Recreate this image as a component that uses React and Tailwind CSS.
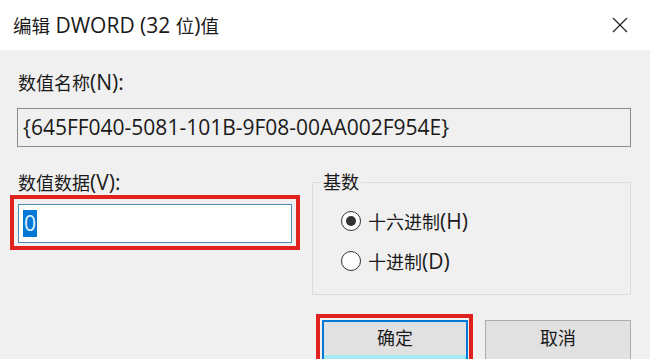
import React from 'react';

const font = { fontFamily: '"Open Sans", "Noto Sans CJK SC", sans-serif' };

// Latin runs sit a bit larger than the CJK glyphs, like YaHei UI does
const L = ({ children }) => <span className="text-[21px]">{children}</span>;

const Radio = ({ checked, children }) => (
  <label className="flex items-center gap-[7px] h-[24px]">
    <span className="w-[20px] h-[20px] rounded-full border border-[#333] bg-white flex items-center justify-center">
      {checked && <span className="w-[10px] h-[10px] rounded-full bg-[#333]" />}
    </span>
    <span className="text-[18px] leading-[24px] text-[#1a1a1a]">{children}</span>
  </label>
);

const App = () => {
  return (
    <div className="w-[650px] h-[359px] overflow-hidden bg-[#f0f0f0] text-[#1a1a1a]" style={font}>
      {/* title bar */}
      <div className="h-[50px] bg-white flex items-center justify-between pl-[13px] pr-[22px]">
        <span className="text-[18.5px] leading-[26px] text-[#1a1a1a]">
          编辑<L> DWORD (32 </L>位<L>)</L>值
        </span>
        <svg width="16" height="16" viewBox="0 0 16 16" className="text-[#222]">
          <path d="M1 1 L15 15 M15 1 L1 15" stroke="currentColor" strokeWidth="1.2" fill="none" />
        </svg>
      </div>

      {/* name */}
      <div className="pl-[17px] pr-[19px] pt-[19px]">
        <div className="pl-[1px] text-[18px] leading-[26px] mb-[12px]">数值名称<L>(N):</L></div>
        <div className="h-[39px] border border-[#8c8c8c] bg-[#f0f0f0] flex items-center pl-[5px] text-[21px] text-[#1a1a1a]">
          {'{645FF040-5081-101B-9F08-00AA002F954E}'}
        </div>
      </div>

      <div className="flex pl-[10px] pr-[19px] pt-[23px]">
        {/* value data */}
        <div className="w-[290px]">
          <div className="pl-[8px] text-[18px] leading-[24px]">数值数据<L>(V):</L></div>
          <div className="border-4 border-[#e0221f] px-[4px] pt-[5px] pb-[3px]">
            <div className="h-[39px] border border-[#4a8db3] bg-white flex items-center pl-[4px]">
              <span className="bg-[#0078d7] text-[#e6f2fb] text-[21px] leading-[27px] px-[1px]">0</span>
            </div>
          </div>
        </div>

        {/* base group + buttons */}
        <div className="flex-1 ml-[12px]">
          <fieldset className="border border-[#dcdcdc] h-[125px]">
            <legend className="ml-[8px] px-[2px] text-[18px] leading-[24px]">基数</legend>
            <div className="flex flex-col gap-[16px] pt-[15px] pl-[28px]">
              <Radio checked>十六进制<L>(H)</L></Radio>
              <Radio>十进制<L>(D)</L></Radio>
            </div>
          </fieldset>

          <div className="flex justify-end gap-[12px] mt-[19px]">
            <div className="border-4 border-[#e0221f] pt-[2px] pl-[2px] pr-[1px]">
              <button className="w-[146px] h-[44px] border-2 border-[#0078d7] bg-[#e1e1e1] flex flex-col">
                <span className="h-[33px] flex items-center justify-center text-[18px]">确定</span>
                <span className="flex-1 bg-[#a6e8f2]" />
              </button>
            </div>
            <button className="w-[146px] h-[44px] mt-[6px] border border-[#adadad] bg-[#e1e1e1] flex flex-col">
              <span className="h-[35px] flex items-center justify-center text-[18px]">取消</span>
            </button>
          </div>
        </div>
      </div>
    </div>
  );
};

export default App;
